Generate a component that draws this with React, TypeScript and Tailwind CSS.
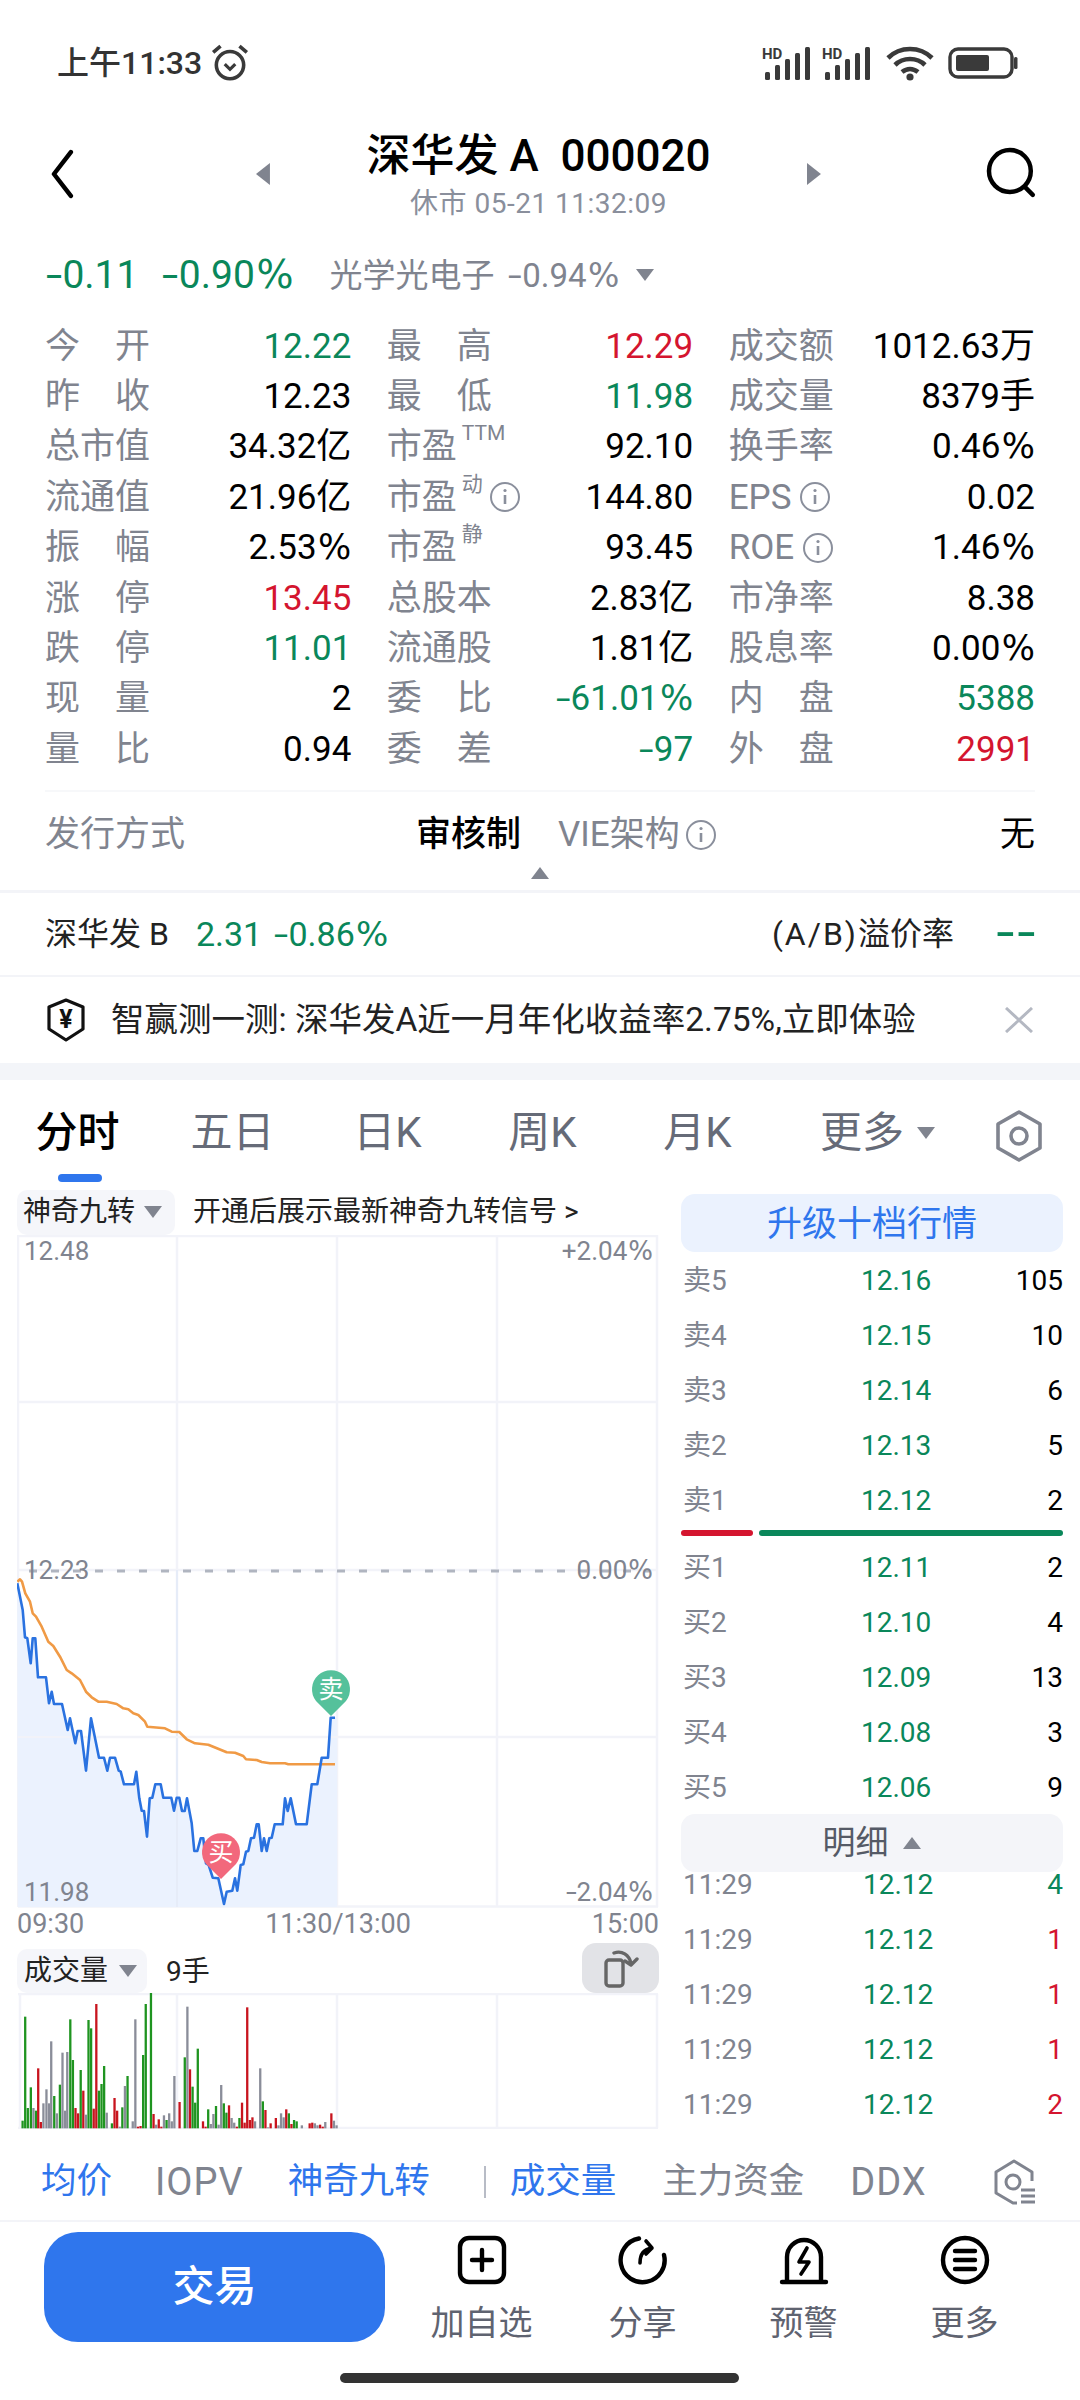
import type { ReactNode } from "react";

const GREEN = "text-[#0a875a]";
const RED = "text-[#d4152f]";
const BLACK = "text-black";

type Cell = { label: ReactNode; value: string; color?: string };

const InfoIcon = ({ className = "" }: { className?: string }) => (
  <svg viewBox="0 0 32 32" className={`w-[32px] h-[32px] shrink-0 ${className}`} fill="none" stroke="#8a8f9c" strokeWidth="2">
    <circle cx="16" cy="16" r="14" />
    <path d="M16 14v9" strokeWidth="2.6" />
    <circle cx="16" cy="9.5" r="1.6" fill="#8a8f9c" stroke="none" />
  </svg>
);

// the app's number font has a longer minus and a wider percent sign than Roboto
const Num = ({ v }: { v: string }) => {
  const neg = v.startsWith("-");
  const pct = v.endsWith("%");
  const core = v.slice(neg ? 1 : 0, pct ? -1 : undefined);
  return (
    <>
      {neg && <span className="inline-block w-[0.42em] text-center scale-x-[1.5]">-</span>}
      {core}
      {pct && <span className="font-['DejaVu_Sans'] pl-[0.04em]">%</span>}
    </>
  );
};

const Spread = ({ a, b }: { a: string; b: string }) => (
  <span className="flex justify-between w-[105px]">
    <span>{a}</span>
    <span>{b}</span>
  </span>
);

const PeLabel = ({ sup, info }: { sup: string; info?: boolean }) => (
  <span className="flex items-center">
    <span>市盈</span>
    <span className="relative w-[32px] h-[35px]">
      <span className="absolute left-[5px] top-[-6px] text-[21px] leading-none whitespace-nowrap">{sup}</span>
    </span>
    {info && <InfoIcon />}
  </span>
);

const column: Cell[][] = [
  [
    { label: <Spread a="今" b="开" />, value: "12.22", color: GREEN },
    { label: <Spread a="最" b="高" />, value: "12.29", color: RED },
    { label: "成交额", value: "1012.63万" },
  ],
  [
    { label: <Spread a="昨" b="收" />, value: "12.23" },
    { label: <Spread a="最" b="低" />, value: "11.98", color: GREEN },
    { label: "成交量", value: "8379手" },
  ],
  [
    { label: "总市值", value: "34.32亿" },
    { label: <PeLabel sup="TTM" />, value: "92.10" },
    { label: "换手率", value: "0.46%" },
  ],
  [
    { label: "流通值", value: "21.96亿" },
    { label: <PeLabel sup="动" info />, value: "144.80" },
    {
      label: (
        <span className="flex items-center gap-[8px]">
          EPS
          <InfoIcon />
        </span>
      ),
      value: "0.02",
    },
  ],
  [
    { label: <Spread a="振" b="幅" />, value: "2.53%" },
    { label: <PeLabel sup="静" />, value: "93.45" },
    {
      label: (
        <span className="flex items-center gap-[8px]">
          ROE
          <InfoIcon />
        </span>
      ),
      value: "1.46%",
    },
  ],
  [
    { label: <Spread a="涨" b="停" />, value: "13.45", color: RED },
    { label: "总股本", value: "2.83亿" },
    { label: "市净率", value: "8.38" },
  ],
  [
    { label: <Spread a="跌" b="停" />, value: "11.01", color: GREEN },
    { label: "流通股", value: "1.81亿" },
    { label: "股息率", value: "0.00%" },
  ],
  [
    { label: <Spread a="现" b="量" />, value: "2" },
    { label: <Spread a="委" b="比" />, value: "-61.01%", color: GREEN },
    { label: <Spread a="内" b="盘" />, value: "5388", color: GREEN },
  ],
  [
    { label: <Spread a="量" b="比" />, value: "0.94" },
    { label: <Spread a="委" b="差" />, value: "-97", color: GREEN },
    { label: <Spread a="外" b="盘" />, value: "2991", color: RED },
  ],
];

const asks = [
  ["卖5", "12.16", "105"],
  ["卖4", "12.15", "10"],
  ["卖3", "12.14", "6"],
  ["卖2", "12.13", "5"],
  ["卖1", "12.12", "2"],
];
const bids = [
  ["买1", "12.11", "2"],
  ["买2", "12.10", "4"],
  ["买3", "12.09", "13"],
  ["买4", "12.08", "3"],
  ["买5", "12.06", "9"],
];
const ticks = [
  ["4", GREEN],
  ["1", RED],
  ["1", RED],
  ["1", RED],
  ["2", RED],
];

// traced from the reference, units are 3x px from (0,1450)
const bluePts = [
  [52, 400], [68, 480], [75, 562], [82, 565], [92, 640], [98, 565], [106, 565], [114, 682], [138, 682], [147, 760],
  [155, 725], [162, 762], [186, 762], [203, 840], [210, 805], [226, 880], [233, 843], [243, 843], [258, 962], [273, 805],
  [297, 923], [312, 923], [322, 962], [330, 923], [345, 923], [356, 962], [362, 965], [372, 1003], [402, 1003], [409, 965],
  [418, 1045], [425, 1082], [432, 1083], [441, 1160], [449, 1045], [457, 1043], [466, 1003], [482, 1003], [490, 1043], [514, 1043],
  [522, 1082], [530, 1043], [538, 1043], [546, 1083], [554, 1083], [561, 1045], [575, 1120], [583, 1203], [592, 1203], [602, 1165],
  [610, 1165], [618, 1240], [626, 1245], [638, 1283], [655, 1285], [672, 1362], [680, 1325], [697, 1322], [705, 1285], [712, 1322],
  [722, 1245], [730, 1243], [738, 1205], [745, 1203], [753, 1165], [762, 1163], [770, 1123], [776, 1123], [785, 1203], [792, 1165],
  [800, 1203], [808, 1165], [815, 1163], [824, 1123], [848, 1123], [855, 1045], [863, 1083], [872, 1045], [888, 1123], [920, 1123],
  [935, 1003], [952, 1003], [965, 923], [984, 923], [992, 803], [1005, 803],
];
const orangePts = [
  [52, 395], [60, 388], [66, 395], [76, 430], [90, 455], [98, 490], [108, 500], [125, 530], [145, 575], [160, 588],
  [180, 620], [200, 660], [215, 670], [240, 690], [258, 725], [275, 742], [295, 755], [320, 755], [350, 762], [370, 775],
  [385, 778], [400, 790], [415, 795], [435, 815], [442, 830], [495, 835], [515, 845], [538, 846], [560, 868], [585, 880],
  [625, 884], [680, 907], [705, 908], [730, 918], [738, 928], [770, 930], [785, 936], [810, 940], [855, 940], [865, 943],
  [1005, 943],
];
const toLine = (pts: number[][]) => pts.map(([x, y]) => `${(x / 3).toFixed(1)},${(1450 + y / 3).toFixed(1)}`).join(" ");

// g = green, r = red, n = neutral; x in zoom units (2.306x), y top in 3x from 1900
const volBars: [number, number, string][] = [
  [52, 662, "g"], [58, 350, "g"], [64, 624, "g"], [71, 562, "g"], [77, 624, "n"], [83, 632, "g"], [88, 505, "r"], [94, 666, "r"], [100, 610, "n"], [107, 568, "n"],
  [113, 610, "n"], [118, 424, "n"], [125, 588, "g"], [131, 640, "n"], [138, 554, "g"], [144, 458, "n"], [150, 632, "n"], [155, 456, "n"], [162, 358, "g"], [168, 480, "g"],
  [174, 624, "r"], [180, 640, "r"], [186, 510, "g"], [192, 572, "r"], [198, 644, "n"], [204, 360, "g"], [210, 385, "g"], [216, 626, "r"], [222, 312, "r"], [228, 572, "g"],
  [234, 552, "g"], [240, 498, "g"], [246, 638, "n"], [258, 670, "g"], [264, 594, "r"], [270, 632, "r"], [276, 680, "n"], [282, 622, "g"], [288, 558, "n"], [294, 528, "g"],
  [306, 664, "n"], [312, 358, "n"], [318, 680, "r"], [324, 678, "r"], [330, 465, "g"], [336, 312, "g"], [348, 272, "g"], [354, 642, "r"], [360, 674, "n"], [366, 658, "r"],
  [372, 680, "r"], [378, 646, "n"], [384, 660, "g"], [390, 640, "n"], [396, 664, "n"], [402, 528, "n"], [414, 606, "r"], [426, 472, "g"], [432, 320, "n"], [438, 508, "r"],
  [444, 560, "g"], [450, 608, "g"], [456, 446, "g"], [468, 664, "r"], [474, 680, "r"], [480, 628, "g"], [486, 672, "n"], [492, 642, "n"], [498, 618, "g"], [504, 674, "n"],
  [510, 555, "n"], [516, 610, "g"], [522, 638, "g"], [528, 616, "r"], [534, 654, "n"], [540, 668, "n"], [546, 680, "r"], [552, 654, "g"], [558, 608, "r"], [564, 668, "r"],
  [570, 322, "r"], [576, 660, "r"], [582, 652, "r"], [588, 664, "n"], [600, 505, "n"], [606, 604, "g"], [612, 630, "r"], [618, 682, "n"], [624, 670, "r"], [636, 654, "r"],
  [642, 676, "n"], [648, 640, "n"], [654, 652, "n"], [660, 628, "r"], [666, 640, "g"], [672, 672, "r"], [678, 660, "g"], [684, 664, "g"], [696, 676, "n"], [714, 670, "r"],
  [720, 668, "r"], [726, 670, "n"], [732, 676, "n"], [738, 674, "r"], [744, 680, "r"], [750, 666, "n"], [764, 640, "r"], [770, 662, "n"], [776, 676, "n"],
];
const barFill: Record<string, string> = { g: "#1f9420", r: "#c8141e", n: "#8a8d99" };

const Pin = ({ cx, cy, fill, label }: { cx: number; cy: number; fill: string; label: string }) => (
  <g>
    <path d={`M${cx} ${cy + 27}L${cx - 15} ${cy + 12}A19 19 0 1 1 ${cx + 15} ${cy + 12}Z`} fill={fill} />
    <text x={cx} y={cy + 9} textAnchor="middle" fontSize="25" fill="#fff" fontFamily="'Noto Sans CJK SC', sans-serif">
      {label}
    </text>
  </g>
);

const Caret = ({ className = "" }: { className?: string }) => (
  <svg viewBox="0 0 20 14" className={`w-[20px] h-[14px] shrink-0 ${className}`} fill="#80848f">
    <path d="M1 1h18L10 13z" />
  </svg>
);

const CaretUp = ({ className = "" }: { className?: string }) => (
  <svg viewBox="0 0 20 14" className={`w-[20px] h-[14px] shrink-0 ${className}`} fill="#80848f">
    <path d="M1 13h18L10 1z" />
  </svg>
);

const SignalIcon = () => (
  <svg viewBox="0 0 52 34" className="w-[52px] h-[34px]" fill="#3a3a3a">
    <text x="0" y="13" fontSize="15" fontWeight="700" fontFamily="Roboto, sans-serif">
      HD
    </text>
    <rect x="3" y="26" width="5" height="8" rx="1.5" />
    <rect x="13" y="19" width="5" height="15" rx="1.5" />
    <rect x="23" y="13" width="5" height="21" rx="1.5" />
    <rect x="33" y="7" width="5" height="27" rx="1.5" />
    <rect x="43" y="1" width="5" height="33" rx="1.5" />
  </svg>
);

const App = () => {
  return (
    <div className="relative w-[1080px] h-[2400px] bg-white overflow-hidden flex flex-col font-[Roboto,'Noto_Sans_CJK_SC',sans-serif] leading-none">
      {/* Status bar */}
      <div className="h-[124px] shrink-0 flex items-center pl-[57px] pr-[62px] pt-[2px] text-[#333] text-[32px] font-medium">
        <span>上午11:33</span>
        <svg viewBox="0 0 38 38" className="w-[40px] h-[40px] ml-[8px]" fill="none" stroke="#3a3a3a" strokeWidth="3.4">
          <circle cx="19" cy="21" r="13" />
          <path d="M14 20l5 5 5-5" strokeWidth="3" />
          <path d="M3 9l7-6M35 9l-7-6" strokeWidth="3.4" />
        </svg>
        <div className="ml-auto flex items-center">
          <SignalIcon />
          <div className="ml-[8px]">
            <SignalIcon />
          </div>
          <svg viewBox="0 0 48 36" className="w-[48px] h-[36px] ml-[12px]" fill="none" stroke="#3a3a3a" strokeWidth="4.6">
            <path d="M2 13C14 1 34 1 46 13" />
            <path d="M9 20c8-8 22-8 30 0" />
            <path d="M16 27c5-4 11-4 16 0" />
            <circle cx="24" cy="32" r="3.6" fill="#3a3a3a" stroke="none" />
          </svg>
          <svg viewBox="0 0 70 32" className="w-[70px] h-[32px] ml-[14px]" fill="none">
            <rect x="2" y="2" width="62" height="28" rx="8" stroke="#3a3a3a" strokeWidth="3.4" />
            <rect x="8" y="8" width="33" height="16" rx="2" fill="#3a3a3a" />
            <rect x="66" y="10" width="3.5" height="12" rx="1.5" fill="#3a3a3a" />
          </svg>
        </div>
      </div>

      {/* Stock title */}
      <div className="h-[96px] shrink-0 flex items-start px-[42px]">
        <svg viewBox="0 0 36 50" className="w-[36px] h-[50px] mt-[25px]" fill="none" stroke="#000" strokeWidth="4.5" strokeLinecap="round" strokeLinejoin="round">
          <path d="M29 3L12 25l17 22" />
        </svg>
        <svg viewBox="0 0 16 22" className="w-[16px] h-[22px] ml-[177px] mt-[39px]" fill="#80848f">
          <path d="M15 0v22L1 11z" />
        </svg>
        <div className="w-[538px] flex flex-col items-center">
          <div className="h-[62px] pt-[1px] flex items-center text-[44px] font-medium text-black whitespace-pre">深华发 A  000020</div>
          <div className="h-[34px] pt-[1px] flex items-center text-[28px] tracking-[0.5px] text-[#8a8f9c] whitespace-pre">休市 05-21 11:32:09</div>
        </div>
        <svg viewBox="0 0 16 22" className="w-[16px] h-[22px] mt-[39px]" fill="#80848f">
          <path d="M1 0v22L15 11z" />
        </svg>
        <svg viewBox="0 0 52 52" className="w-[52px] h-[52px] ml-[164px] mt-[23px]" fill="none" stroke="#000" strokeWidth="4.5" strokeLinecap="round">
          <circle cx="24" cy="24" r="21" />
          <path d="M39 40l8 8" />
        </svg>
      </div>

      {/* Change row */}
      <div className="h-[100px] shrink-0 flex items-center pl-[46px] pt-[10px] whitespace-nowrap">
        <span className={`text-[39px] ${GREEN}`}>
          <Num v="-0.11" />
        </span>
        <span className={`text-[39px] ml-[24px] ${GREEN}`}>
          <Num v="-0.90%" />
        </span>
        <span className="text-[33px] ml-[36px] text-[#80848f]">光学光电子</span>
        <span className="text-[33px] ml-[14px] text-[#80848f]">
          <Num v="-0.94%" />
        </span>
        <Caret className="ml-[16px]" />
      </div>

      {/* Quote grid */}
      <div className="px-[45px] mt-[1px] grid grid-cols-3 gap-x-[35.5px] shrink-0">
        {column.flat().map((c, i) => (
          <div key={i} className="h-[50.4px] flex items-center justify-between text-[35px] whitespace-nowrap">
            <span className="text-[#80848f]">{c.label}</span>
            <span className={c.color ?? BLACK}>
              <Num v={c.value} />
            </span>
          </div>
        ))}
      </div>

      <div className="mx-[45px] h-[2px] bg-[#f7f8fa] mt-[15px] shrink-0" />

      {/* Issue row */}
      <div className="h-[70px] pt-[16px] shrink-0 flex items-center px-[45px] text-[35px]">
        <span className="text-[#80848f]">发行方式</span>
        <span className="ml-[231px] text-black font-medium">审核制</span>
        <span className="ml-[37px] text-[#80848f]">VIE架构</span>
        <InfoIcon className="ml-[5px]" />
        <span className="ml-auto text-black">无</span>
      </div>
      <div className="h-[28px] pt-[4px] shrink-0 flex justify-center">
        <CaretUp />
      </div>
      <div className="h-[3px] bg-[#f3f4f8] shrink-0" />

      {/* B share row */}
      <div className="h-[84px] shrink-0 flex items-center pl-[45px] pr-[43px] text-[32px] text-[#222] border-b-2 border-[#f3f4f8] whitespace-nowrap">
        <span>深华发 B</span>
        <span className={`ml-[27px] text-[34px] ${GREEN}`}>2.31</span>
        <span className={`ml-[12px] text-[34px] ${GREEN}`}>
          <Num v="-0.86%" />
        </span>
        <span className="ml-auto tracking-[2px]">(A/B)</span>
        <span>溢价率</span>
        <span className={`ml-[41px] flex text-[40px] font-medium ${GREEN}`}>
          <span className="w-[21px] text-center scale-x-[1.5]">-</span>
          <span className="w-[21px] text-center scale-x-[1.5]">-</span>
        </span>
      </div>

      {/* Promo banner */}
      <div className="h-[86px] shrink-0 flex items-center pl-[46px] pr-[47px] text-[33.5px] text-[#222]">
        <svg viewBox="0 0 40 44" className="w-[40px] h-[44px] shrink-0" fill="none" stroke="#111" strokeWidth="3.2" strokeLinejoin="round">
          <path d="M20 2l17 7v22L20 42 3 31V9z" />
          <text x="20" y="30" textAnchor="middle" fontSize="25" fontWeight="700" fill="#111" stroke="none" fontFamily="Roboto, sans-serif">
            ¥
          </text>
        </svg>
        <span className="ml-[25px] whitespace-nowrap">智赢测一测: 深华发A近一月年化收益率2.75%,立即体验</span>
        <svg viewBox="0 0 28 26" className="ml-auto w-[28px] h-[26px]" fill="none" stroke="#b4b8c2" strokeWidth="3">
          <path d="M1 1l26 24M27 1L1 25" />
        </svg>
      </div>
      <div className="h-[17.4px] bg-[#f3f5f9] shrink-0" />

      {/* Period tabs */}
      <div className="h-[102px] pt-[4px] shrink-0 relative flex items-center text-[#666b78] text-[42px]">
        {["分时", "五日", "日K", "周K", "月K"].map((t, i) => (
          <div key={t} className={`w-[155px] text-center ${i === 0 ? "text-black font-medium" : ""}`}>
            {t}
          </div>
        ))}
        <div className="pl-[45px] flex items-center">
          更多
          <Caret className="ml-[12px]" />
        </div>
        <svg viewBox="0 0 48 52" className="w-[48px] h-[52px] absolute left-[995px] top-[30px]" fill="none" stroke="#80848f" strokeWidth="3.6" strokeLinejoin="round">
          <path d="M24 2l21 12v24L24 50 3 38V14z" />
          <circle cx="24" cy="26" r="8" />
        </svg>
        <div className="absolute left-[58px] top-[94px] w-[44px] h-[8px] rounded-full bg-[#2f76ed]" />
      </div>

      {/* Chart + order book */}
      <div className="h-[948px] shrink-0 flex">
        <div className="w-[681px] shrink-0 pt-[8px] pl-[17px]">
          <div className="h-[45px] flex items-center text-[28px] text-[#222]">
            <div className="h-[45px] w-[158px] rounded-[10px] bg-[#f5f6fa] flex items-center pl-[6px]">
              神奇九转
              <Caret className="ml-[8px]" />
            </div>
            <span className="ml-[18px] whitespace-nowrap">开通后展示最新神奇九转信号 &gt;</span>
          </div>
          <div className="relative w-[642px] h-[673px] text-[26px] text-[#80848f]">
            <svg viewBox="17 1235 642 673" className="absolute inset-0 w-[642px] h-[673px]" fill="none">
              <g stroke="#f2f3f9" strokeWidth="2.5">
                <path d="M18 1235V1907M177 1235V1907M337 1235V1907M497 1235V1907M657 1235V1907" />
                <path d="M18 1236H658M18 1402H658M18 1570H658M18 1737H658M18 1906.5H658" />
              </g>
              <polygon points={`18,1907 ${toLine(bluePts)} 337,1717 337,1907`} fill="#ebf2fe" />
              <path d="M177 1570V1907" stroke="#e6ecf8" strokeWidth="2" />
              <path d="M18 1737H337" stroke="#f2f3f9" strokeWidth="2" />
              <path d="M29 1571H650" stroke="#b0b5c0" strokeWidth="3" strokeDasharray="8 14" />
              <polyline points={toLine(orangePts)} stroke="#f09a45" strokeWidth="2.6" strokeLinejoin="round" />
              <polyline points={toLine(bluePts)} stroke="#2a72e0" strokeWidth="2.6" strokeLinejoin="round" />
              <Pin cx={221} cy={1852} fill="#f2687c" label="买" />
              <Pin cx={331} cy={1689} fill="#55c19b" label="卖" />
            </svg>
            <span className="absolute left-[7px] top-[3px]">12.48</span>
            <span className="absolute right-[6px] top-[3px]">
              <Num v="+2.04%" />
            </span>
            <span className="absolute left-[7px] top-[322px]">12.23</span>
            <span className="absolute right-[6px] top-[322px]">
              <Num v="0.00%" />
            </span>
            <span className="absolute left-[7px] top-[644px]">11.98</span>
            <span className="absolute right-[6px] top-[644px]">
              <Num v="-2.04%" />
            </span>
          </div>
          <div className="h-[33px] w-[642px] flex items-center justify-between text-[27px] text-[#80848f]">
            <span>09:30</span>
            <span>11:30/13:00</span>
            <span>15:00</span>
          </div>
          <div className="h-[52px] w-[642px] flex items-end text-[28px] text-[#222]">
            <div className="h-[44px] w-[130px] rounded-[10px] bg-[#f5f6fa] flex items-center pl-[7px]">
              成交量
              <Caret className="ml-[10px]" />
            </div>
            <span className="ml-[19px] mb-[7px]">9手</span>
            <div className="ml-auto h-[50px] w-[77px] rounded-[14px] bg-[#e2e3e7] flex items-center justify-center">
              <svg viewBox="0 0 36 40" className="w-[36px] h-[40px]" fill="none" stroke="#666" strokeWidth="3.4" strokeLinejoin="round">
                <rect x="3" y="12" width="17" height="26" rx="3" />
                <path d="M11 5c8-3 15 2 17 10M22 13l6 4 6-6" strokeLinecap="round" />
              </svg>
            </div>
          </div>
          <svg viewBox="17 1993 642 136" className="w-[642px] h-[136px]" fill="none">
            <path d="M18 1994H658M18 2128H658M20 1994V2128M177 1994V2128M337 1994V2128M497 1994V2128M657 1994V2128" stroke="#f2f3f9" strokeWidth="2.5" />
            {volBars.map(([x, y, c], i) => (
              <rect key={i} x={x / 2.306 - 1.1} y={1900 + y / 3} width="2.3" height={Math.max(685 - y, 3) / 3} fill={barFill[c]} />
            ))}
          </svg>
        </div>

        <div className="w-[382px] shrink-0 pt-[12px] text-[28px]">
          <div className="h-[58px] pt-[3px] rounded-[14px] bg-[#ebf2fe] flex items-center justify-center text-[35px] text-[#2f76ed]">升级十档行情</div>
          {asks.map(([a, b, c]) => (
            <div key={a} className="h-[55px] pt-[3px] flex items-center pl-[2px]">
              <span className="w-[178px] text-[#80848f]">{a}</span>
              <span className={GREEN}>{b}</span>
              <span className="ml-auto text-black">{c}</span>
            </div>
          ))}
          <div className="h-[12px] flex items-center gap-[6px]">
            <div className="w-[72px] h-[6px] rounded-full bg-[#d4152f]" />
            <div className="flex-1 h-[6px] rounded-full bg-[#0a875a]" />
          </div>
          {bids.map(([a, b, c]) => (
            <div key={a} className="h-[55px] pt-[3px] flex items-center pl-[2px]">
              <span className="w-[178px] text-[#80848f]">{a}</span>
              <span className={GREEN}>{b}</span>
              <span className="ml-auto text-black">{c}</span>
            </div>
          ))}
          <div className="h-[58px] rounded-[14px] bg-[#f4f5f9] flex items-center justify-center text-[33px] text-[#555a66]">
            明细
            <CaretUp className="ml-[13px]" />
          </div>
          <div className="-mt-[16px]">
            {ticks.map(([q, color], i) => (
              <div key={i} className="h-[55px] pt-[3px] flex items-center pl-[2px]">
                <span className="w-[180px] text-[#80848f]">11:29</span>
                <span className={GREEN}>12.12</span>
                <span className={`ml-auto ${color}`}>{q}</span>
              </div>
            ))}
          </div>
        </div>
      </div>

      {/* Indicator tabs */}
      <div className="h-[92px] pt-[14px] shrink-0 flex items-center pl-[41px] text-[35.5px] text-[#80848f] border-b-2 border-[#f3f4f8] whitespace-nowrap">
        <span className="text-[#2f76ed]">均价</span>
        <span className="ml-[43px] text-[38px] tracking-[1px]">IOPV</span>
        <span className="ml-[44px] text-[#2f76ed]">神奇九转</span>
        <div className="ml-[54px] w-[2px] h-[32px] bg-[#b8bcc6]" />
        <span className="ml-[24px] text-[#2f76ed]">成交量</span>
        <span className="ml-[46px]">主力资金</span>
        <span className="ml-[46px] text-[38px] tracking-[1px]">DDX</span>
        <svg viewBox="0 0 44 46" className="w-[44px] h-[46px] ml-[66px]" fill="none" stroke="#80848f" strokeWidth="3">
          <path d="M24 44H20L3 34V13L21 2l18 11v9" strokeLinejoin="round" />
          <circle cx="20" cy="23" r="7" />
          <path d="M28 31h14M28 37h14M28 43h14" />
        </svg>
      </div>

      {/* Bottom actions */}
      <div className="flex-1 flex items-start pl-[44px] pt-[10px]">
        <div className="w-[341px] h-[110px] rounded-[34px] bg-[#2f76ed] flex items-center justify-center text-[42px] font-medium text-white">交易</div>
        {[
          {
            label: "加自选",
            icon: (
              <>
                <rect x="3" y="3" width="44" height="44" rx="9" />
                <path d="M25 15v20M15 25h20" />
              </>
            ),
          },
          {
            label: "分享",
            icon: (
              <>
                <path d="M21 3.5A22 22 0 1 0 46 20" />
                <path d="M22 28c0-9 4-14 12-15M28 6l6 7-6 6" strokeWidth="3.6" />
              </>
            ),
          },
          {
            label: "预警",
            icon: (
              <>
                <path d="M8 46V22a17 17 0 0 1 34 0v24" />
                <path d="M3 47h44" />
                <path d="M28 13l-8 14h10l-8 12" strokeWidth="3.6" />
              </>
            ),
          },
          {
            label: "更多",
            icon: (
              <>
                <circle cx="25" cy="25" r="22" />
                <path d="M15 16h20M15 25h20M15 34h20" />
              </>
            ),
          },
        ].map((a, i) => (
          <div key={a.label} className={`w-[161px] flex flex-col items-center ${i === 0 ? "ml-[16px]" : ""}`}>
            <svg viewBox="0 0 50 50" className="w-[50px] h-[50px] mt-[3px]" fill="none" stroke="#000" strokeWidth="4.4" strokeLinejoin="round" strokeLinecap="round">
              {a.icon}
            </svg>
            <span className="mt-[21px] text-[34px] text-[#5f6370]">{a.label}</span>
          </div>
        ))}
      </div>

      {/* Home indicator */}
      <div className="absolute left-[340px] top-[2373px] w-[399px] h-[10px] rounded-full bg-[#333]" />
    </div>
  );
};

export default App;
